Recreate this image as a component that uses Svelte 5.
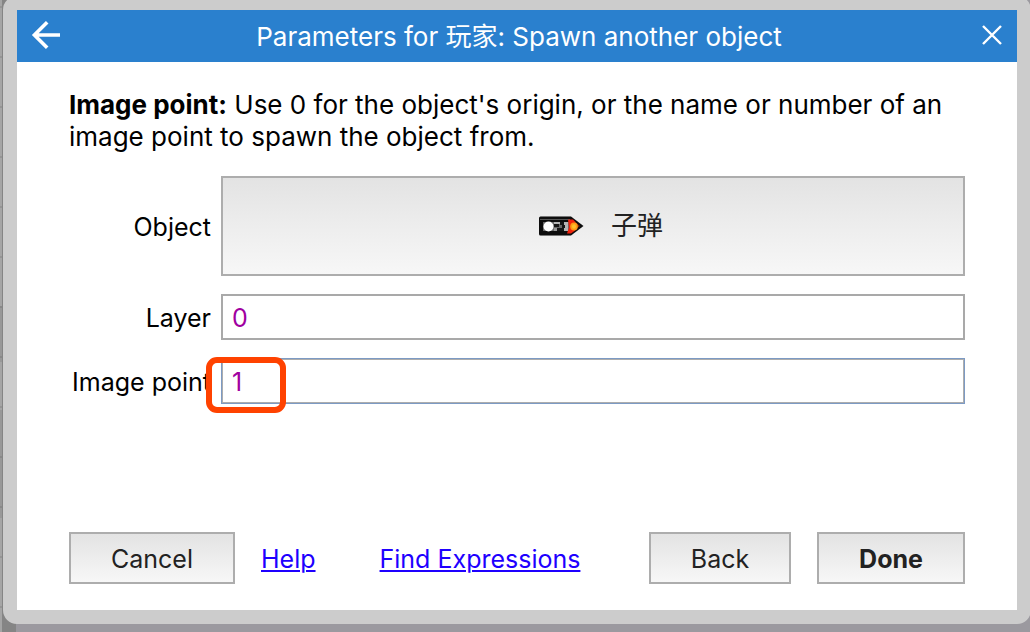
<script lang="ts">
  let layer = $state('0');
  let imagePoint = $state('1');
</script>

<div class="page">
  <section class="dialog" aria-labelledby="title">
    <header>
      <button class="icon" aria-label="Previous">
        <svg width="32" height="34" viewBox="0 2 32 34" fill="none" stroke="#fff" stroke-width="3.6">
          <path d="M30 18H5M17.2 5.200L4.400 18l12.800 12.800" />
        </svg>
      </button>
      <h1 id="title">Parameters for 玩家: Spawn another object</h1>
      <button class="icon" aria-label="Close">
        <svg width="32" height="34" viewBox="0 0 32 34" fill="none" stroke="#fff" stroke-width="2.4">
          <path d="M7 7l18 18M25 7L7 25" />
        </svg>
      </button>
    </header>

    <div class="body">
      <p><strong>Image point:</strong> Use 0 for the object's origin, or the name or number of an image point to spawn the object from.</p>

      <form>
        <label for="object">Object</label>
        <button id="object" type="button" class="btn object">
          <svg width="48" height="24" viewBox="0 0 48 24" aria-hidden="true">
            <defs>
              <filter id="soft" x="-10%" y="-10%" width="120%" height="120%">
                <feGaussianBlur stdDeviation="0.7" />
              </filter>
            </defs>
            <g filter="url(#soft)">
              <path d="M2 4q0-1.500 1.500-1.500H34L46.500 12L34 21.500H3.500Q2 21.500 2 20Z" fill="#0c0c0c" />
              <path d="M3 5.500H33" stroke="#555" stroke-width="1" />
              <path d="M6 8H32V17H6Z" fill="#686868" />
              <ellipse cx="11.500" cy="12.500" rx="5" ry="5" fill="#fff" />
              <path d="M17 8h6v2h-6zM27 8h4v9h-4z" fill="#b4b4b4" />
              <path d="M17 10h5v3h-5zM23 8h4v3h-4zM20 14h7v3h-7zM25 11h3v3h-3z" fill="#161616" />
              <path d="M17 14h3v3h-3z" fill="#999" />
              <path d="M31 5.500h5l3 3-1 8-4 3h-4l2-6z" fill="#f0240c" />
              <path d="M38 8l5 4-5 4z" fill="#8a2610" />
              <ellipse cx="37" cy="12.500" rx="3.800" ry="4" fill="#ff9a12" />
              <ellipse cx="37" cy="12.500" rx="2" ry="2.200" fill="#ffc02c" />
            </g>
          </svg>
          <span>子弹</span>
        </button>

        <label for="layer">Layer</label>
        <input id="layer" type="text" bind:value={layer} />

        <label for="point">Image point</label>
        <div class="field">
          <input id="point" class="active" type="text" bind:value={imagePoint} />
          <span class="marker"></span>
        </div>
      </form>

      <footer>
        <button class="btn cancel">Cancel</button>
        <a href="#help">Help</a>
        <a class="find" href="#expressions">Find Expressions</a>
        <button class="btn back">Back</button>
        <button class="btn done">Done</button>
      </footer>
    </div>
  </section>
</div>

<style>
  :global(body) {
    margin: 0;
    overflow: hidden;
  }
  .page {
    box-sizing: border-box;
    min-height: 100vh;
    display: flex;
    overflow: hidden;
    padding-left: 3px;
    padding-bottom: 8px;
    background:
      linear-gradient(#858585, #858585) 2px 0 / 14px 100% no-repeat,
      linear-gradient(transparent 306px, rgba(0, 0, 0, 0.08) 306px 362px, transparent 362px 410px, rgba(0, 0, 0, 0.08) 410px 518px, transparent 518px) 0 0 / 2px 100% no-repeat,
      repeating-linear-gradient(#a5a5a5 0 6px, #959595 6px 8px, #a5a5a5 8px 50px) 0 0 / 2px 100% no-repeat,
      linear-gradient(#9b999f, #9b999f);
    font: 25px/32px Inter, "Noto Sans CJK SC", sans-serif;
    color: #000;
  }
  .dialog {
    flex: 1;
    display: flex;
    flex-direction: column;
    margin: -4px -1px 0 0;
    border: 14px solid #ccc;
    border-radius: 14px;
    background: #ccc;
  }
  header {
    display: flex;
    align-items: center;
    height: 52px;
    padding: 0 9px 0 13px;
    background: #2a80ce;
    color: #fff;
  }
  h1 {
    flex: 1;
    margin: 0;
    padding-top: 2px;
    font: inherit;
    font-size: 26px;
    text-align: center;
  }
  .icon {
    display: flex;
    padding: 0;
    border: 0;
    background: none;
  }
  .body {
    flex: 1;
    display: flex;
    flex-direction: column;
    padding: 27px 52px 26px;
    background: #fff;
  }
  p {
    margin: 0 0 23px;
    font-size: 26px;
  }
  form {
    display: grid;
    grid-template-columns: 142px 1fr;
    align-items: center;
    gap: 18px 10px;
  }
  label {
    padding-top: 2px;
    text-align: right;
    white-space: nowrap;
  }
  .btn {
    box-sizing: border-box;
    height: 52px;
    padding: 2px 0 0;
    border: 2px solid #adadad;
    background: linear-gradient(#e3e3e3, #f7f7f7);
    color: #222;
    font: inherit;
  }
  .object {
    display: flex;
    align-items: center;
    justify-content: center;
    gap: 26px;
    height: 100px;
    padding: 0 0 0 14px;
    font-size: 26px;
  }
  input {
    box-sizing: border-box;
    display: block;
    width: 100%;
    height: 46px;
    padding: 2px 9px 0;
    border: 2px solid #a9a9a9;
    border-radius: 0;
    background: #fff;
    color: #a000a0;
    font: inherit;
  }
  .active {
    border: 1px solid #7c9ac4;
    box-shadow: inset 0 0 0 1px #adadad;
    padding: 2px 10px 0;
  }
  .field {
    position: relative;
  }
  .marker {
    position: absolute;
    box-sizing: border-box;
    left: -15px;
    top: -1px;
    width: 80px;
    height: 56px;
    border: 6px solid #ff4200;
    border-radius: 11px;
    pointer-events: none;
  }
  footer {
    display: flex;
    align-items: center;
    margin-top: auto;
  }
  a {
    padding-top: 2px;
    color: #1e00ff;
    text-decoration-thickness: 2px;
    text-underline-offset: 2px;
  }
  .cancel {
    width: 166px;
    margin-right: 26px;
  }
  .find {
    margin-left: 64px;
  }
  .back {
    width: 142px;
    margin: 0 26px 0 auto;
  }
  .done {
    width: 148px;
    font-weight: 700;
  }
</style>
